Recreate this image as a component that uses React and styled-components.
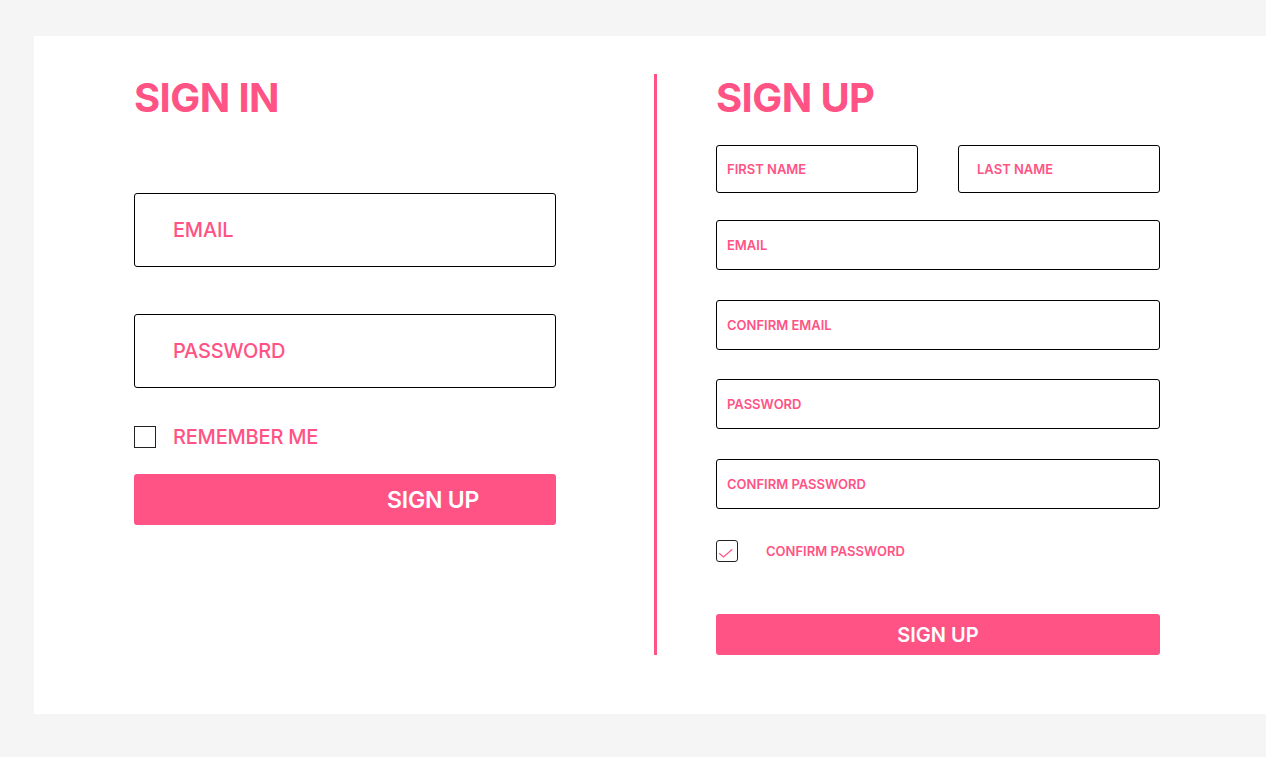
import React from 'react';
import styled, { createGlobalStyle } from 'styled-components';

const GlobalStyle = createGlobalStyle`
  html, body {
    margin: 0;
    background-color: #f5f5f5;
    overflow: hidden;
  }
  * {
    box-sizing: border-box;
  }
  body {
    font-family: Inter, "Noto Sans", sans-serif;
  }
`;

const PINK = '#ff5385';

const App = () => {
  return (
    <>
      <GlobalStyle />
      <Page>
        <Card>
          <SignInColumn>
            <Title>SIGN IN</Title>
            <SignInForm>
              <BigInput placeholder="EMAIL" />
              <BigInput placeholder="PASSWORD" type="password" />
              <RememberRow>
                <BigCheck />
                <BigLabel>REMEMBER ME</BigLabel>
              </RememberRow>
              <SignInButton>SIGN UP</SignInButton>
            </SignInForm>
          </SignInColumn>
          <Divider />
          <SignUpColumn>
            <Title>SIGN UP</Title>
            <SignUpForm>
              <NameRow>
                <SmallInput placeholder="FIRST NAME" />
                <SmallInput placeholder="LAST NAME" pad={18} />
              </NameRow>
              <SmallInput placeholder="EMAIL" tall />
              <SmallInput placeholder="CONFIRM EMAIL" tall />
              <SmallInput placeholder="PASSWORD" tall />
              <SmallInput placeholder="CONFIRM PASSWORD" tall />
              <ConfirmRow>
                <SmallCheck>
                  <svg width="16" height="14" viewBox="0 0 16 14" fill="none">
                    <path d="M1.5 8.5 L5.5 12 L14 4.5" stroke={PINK} strokeWidth="1.1" strokeLinecap="round" strokeLinejoin="round" />
                  </svg>
                </SmallCheck>
                <SmallLabel>CONFIRM PASSWORD</SmallLabel>
              </ConfirmRow>
              <SignUpButton>SIGN UP</SignUpButton>
            </SignUpForm>
          </SignUpColumn>
        </Card>
      </Page>
    </>
  );
};

export default App;

const Page = styled.div`
  padding: 36px 0 43px 34px;
  width: 100vw;
  height: 757px;
  overflow: hidden;
`;

const Card = styled.div`
  display: flex;
  width: 1300px;
  height: 678px;
  background-color: #ffffff;
  padding: 38px 0 59px 100px;
`;

const SignInColumn = styled.div`
  width: 422px;
  display: flex;
  flex-direction: column;
`;

const SignUpColumn = styled.div`
  width: 444px;
  display: flex;
  flex-direction: column;
`;

const Title = styled.h1`
  margin: 0;
  font-size: 40px;
  line-height: 48px;
  font-weight: 700;
  color: ${PINK};
  letter-spacing: -0.6px;
`;

const Divider = styled.div`
  width: 3px;
  background-color: ${PINK};
  margin: 0 59px 0 98px;
`;

const SignInForm = styled.div`
  margin-top: 71px;
  display: flex;
  flex-direction: column;
`;

const BigInput = styled.input`
  height: 74px;
  width: 100%;
  border: 1.5px solid #000;
  border-radius: 3px;
  padding: 0 0 0 38px;
  font-family: inherit;
  font-size: 20px;
  font-weight: 500;
  letter-spacing: -0.2px;
  color: ${PINK};
  outline: none;
  margin-bottom: 47px;
  &:nth-of-type(2) {
    margin-bottom: 37px;
  }
  &::placeholder {
    color: ${PINK};
  }
`;

const RememberRow = styled.div`
  display: flex;
  align-items: center;
  height: 24px;
  gap: 17px;
`;

const BigCheck = styled.span`
  width: 22px;
  height: 22px;
  border: 1.5px solid #222;
  display: inline-block;
`;

const BigLabel = styled.span`
  font-size: 20px;
  font-weight: 500;
  letter-spacing: -0.2px;
  color: ${PINK};
`;

const SignInButton = styled.button`
  margin-top: 25px;
  height: 51px;
  width: 100%;
  border: none;
  border-radius: 3px;
  background-color: ${PINK};
  color: #fff;
  font-family: inherit;
  font-size: 23px;
  font-weight: 600;
  letter-spacing: -0.2px;
  text-align: left;
  padding-left: 253px;
`;

const SignUpForm = styled.div`
  margin-top: 23px;
  display: flex;
  flex-direction: column;
  gap: 29.5px;
`;

const NameRow = styled.div`
  display: flex;
  justify-content: space-between;
  margin-bottom: -2.5px;
`;

const SmallInput = styled.input`
  width: ${(p) => (p.tall ? '100%' : '202px')};
  height: ${(p) => (p.tall ? '50px' : '48px')};
  border: 1.5px solid #000;
  border-radius: 3px;
  padding: 0 0 0 ${(p) => p.pad || 10}px;
  font-family: inherit;
  font-size: 13px;
  font-weight: 600;
  color: ${PINK};
  outline: none;
  &::placeholder {
    color: ${PINK};
  }
`;

const ConfirmRow = styled.div`
  display: flex;
  align-items: center;
  gap: 28px;
  margin-top: 2px;
`;

const SmallCheck = styled.span`
  width: 22px;
  height: 22px;
  border: 1.5px solid #222;
  border-radius: 3px;
  display: inline-flex;
  align-items: flex-end;
  justify-content: flex-start;
  padding: 0 0 2px 1px;
`;

const SmallLabel = styled.span`
  font-size: 13px;
  font-weight: 600;
  color: ${PINK};
`;

const SignUpButton = styled.button`
  margin-top: 22.5px;
  height: 41px;
  width: 100%;
  border: none;
  border-radius: 3px;
  background-color: ${PINK};
  color: #fff;
  font-family: inherit;
  font-size: 20px;
  font-weight: 600;
`;
